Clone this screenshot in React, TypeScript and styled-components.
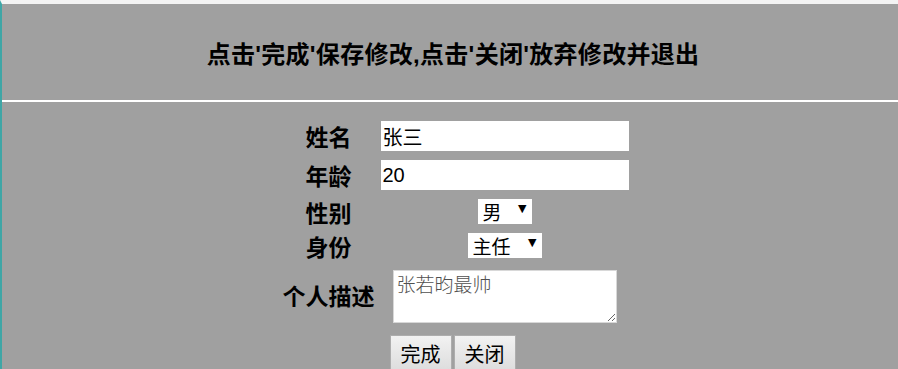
import styled, { createGlobalStyle } from "styled-components";

const GlobalStyle = createGlobalStyle`
    html, body {
        margin: 0;
        padding: 0;
        background: #a0a0a0;
    }
    body {
        font-family: "Liberation Sans", "Noto Sans CJK SC", sans-serif;
    }
`

const Page = styled.div`
    min-height: 369px;
    box-sizing: border-box;
    background: #a0a0a0;
    border-top: 4px solid #f3f3f3;
    border-left: 2px solid #3fa6a6;
`

const Header = styled.header`
    height: 96px;
    display: flex;
    align-items: center;
    justify-content: center;
    padding-left: 6px;
    border-bottom: 2px solid #ffffff;
`

const Title = styled.h2`
    margin: 0;
    font-size: 24px;
    letter-spacing: 0.3px;
    font-weight: 700;
    color: #000;
    font-family: "Liberation Sans", "Noto Sans CJK SC", sans-serif;
`

const Form = styled.form`
    display: grid;
    grid-template-columns: 104px 248px;
    row-gap: 9px;
    justify-content: center;
    align-items: center;
    padding: 19px 0 0 5px;
`

const Label = styled.label`
    text-align: center;
    font-size: 23px;
    font-weight: 700;
    color: #000;
    line-height: 24px;
    font-family: "Noto Sans CJK SC", sans-serif;
`

const Cell = styled.div`
    display: flex;
    justify-content: center;
    align-items: center;
`

const TextInput = styled.input`
    width: 248px;
    height: 30px;
    box-sizing: border-box;
    border: none;
    outline: none;
    padding: 0 2px;
    font-size: 20px;
    font-family: "Liberation Sans", "Noto Sans CJK SC", sans-serif;
    color: #000;
    background: #fff;
`

const SelectBox = styled.div<{ $width: number }>`
    position: relative;
    width: ${(p) => p.$width}px;
    height: 25px;
    background: #fff;
`

const Select = styled.select`
    appearance: none;
    width: 100%;
    height: 100%;
    border: none;
    outline: none;
    background: transparent;
    padding: 0 0 0 5px;
    font-size: 19px;
    line-height: 25px;
    font-family: "Noto Sans CJK SC", sans-serif;
    color: #000;
`

const Arrow = styled.span`
    position: absolute;
    right: 5px;
    top: 3px;
    font-size: 11px;
    color: #000;
    pointer-events: none;
    font-family: "DejaVu Sans", sans-serif;
`

const TextArea = styled.textarea`
    width: 224px;
    height: 53px;
    box-sizing: border-box;
    border: 1px solid #d8d8d8;
    outline: none;
    padding: 1px 3px;
    font-size: 19px;
    line-height: 24px;
    color: #505050;
    font-family: "Noto Sans CJK SC", serif;
    font-weight: 300;
    background: #fff;
    margin-top: 3px;
`

const Actions = styled.div`
    grid-column: 1 / span 2;
    display: flex;
    justify-content: center;
    gap: 2px;
    padding-top: 3px;
`

const Button = styled.button`
    height: 36px;
    padding: 0 10px;
    border: 1px solid #adadad;
    background: linear-gradient(#f2f2f2, #dddddd);
    font-size: 20px;
    font-family: "Noto Sans CJK SC", sans-serif;
    color: #000;
`

const Choice = ({ width, value, options }: { width: number; value: string; options: string[] }) => (
    <SelectBox $width={width}>
        <Select defaultValue={value}>
            {options.map((o) => (
                <option key={o}>{o}</option>
            ))}
        </Select>
        <Arrow>▼</Arrow>
    </SelectBox>
)

export default function App() {
    return (
        <>
            <GlobalStyle />
            <Page>
                <Header>
                    <Title>点击'完成'保存修改,点击'关闭'放弃修改并退出</Title>
                </Header>
                <Form onSubmit={(e) => e.preventDefault()}>
                    <Label>姓名</Label>
                    <Cell>
                        <TextInput defaultValue="张三" />
                    </Cell>
                    <Label>年龄</Label>
                    <Cell>
                        <TextInput defaultValue="20" />
                    </Cell>
                    <Label>性别</Label>
                    <Cell>
                        <Choice width={54} value="男" options={["男", "女"]} />
                    </Cell>
                    <Label>身份</Label>
                    <Cell>
                        <Choice width={74} value="主任" options={["主任", "员工"]} />
                    </Cell>
                    <Label>个人描述</Label>
                    <Cell>
                        <TextArea defaultValue="张若昀最帅" />
                    </Cell>
                    <Actions>
                        <Button type="submit">完成</Button>
                        <Button type="button">关闭</Button>
                    </Actions>
                </Form>
            </Page>
        </>
    );
}
